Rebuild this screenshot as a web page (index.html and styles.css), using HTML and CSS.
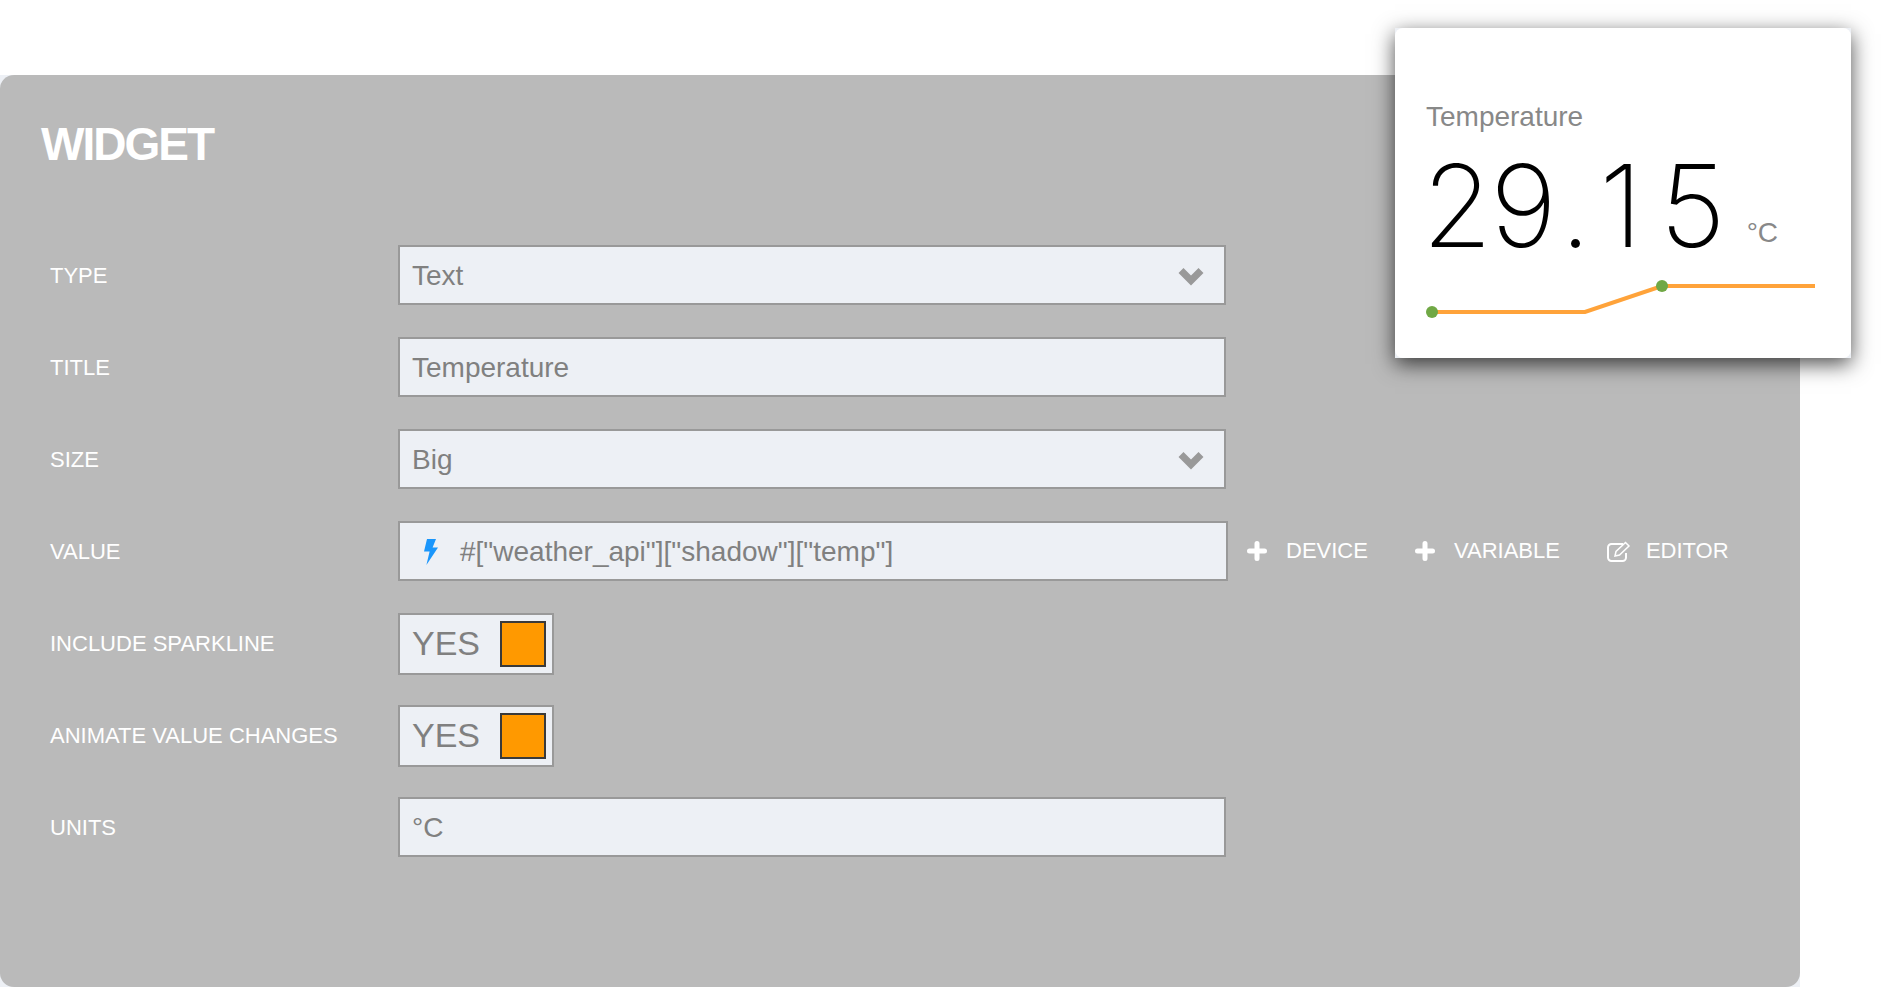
FILE: index.html
```html
<!DOCTYPE html>
<html lang="en">
<head>
<meta charset="utf-8">
<title>Widget</title>
<link rel="stylesheet" href="styles.css">
</head>
<body>
<div class="page">
  <main class="panel-back">
    <div class="panel">
      <h1 class="title">WIDGET</h1>
      <div class="form">
        <div class="row">
          <span class="label">TYPE</span>
          <div class="field field-select"><span>Text</span>
            <svg class="chevron" viewBox="0 0 26 20"><path d="M3 4.500l10 10 10-10" /></svg>
          </div>
        </div>
        <div class="row">
          <span class="label">TITLE</span>
          <div class="field"><span>Temperature</span></div>
        </div>
        <div class="row">
          <span class="label">SIZE</span>
          <div class="field field-select"><span>Big</span>
            <svg class="chevron" viewBox="0 0 26 20"><path d="M3 4.500l10 10 10-10" /></svg>
          </div>
        </div>
        <div class="row">
          <span class="label">VALUE</span>
          <div class="field field-value">
            <svg class="bolt" viewBox="0 0 14 26"><path d="M3 0h9L8.600 8.400H14L2.400 26l3.200-13.600H0z" /></svg>
            <span>#["weather_api"]["shadow"]["temp"]</span>
          </div>
          <div class="actions">
            <a class="action"><svg class="icon-plus" viewBox="0 0 20 20"><path d="M10 2.500v15M2.500 10h15" /></svg>DEVICE</a>
            <a class="action"><svg class="icon-plus" viewBox="0 0 20 20"><path d="M10 2.500v15M2.500 10h15" /></svg>VARIABLE</a>
            <a class="action"><svg class="icon-edit" viewBox="0 0 24 21"><path class="edit-box" d="M16 3H4.500A3.500 3.500 0 0 0 1 6.500v10A3.500 3.500 0 0 0 4.500 20h11a3.500 3.500 0 0 0 3.500-3.500V12" /><path class="edit-pen" d="M8 15l1-4.500L18.500 1.500l3.500 3.500L12.500 14z" /></svg>EDITOR</a>
          </div>
        </div>
        <div class="row">
          <span class="label">INCLUDE SPARKLINE</span>
          <div class="toggle"><span>YES</span><i class="swatch"></i></div>
        </div>
        <div class="row">
          <span class="label">ANIMATE VALUE CHANGES</span>
          <div class="toggle"><span>YES</span><i class="swatch"></i></div>
        </div>
        <div class="row">
          <span class="label">UNITS</span>
          <div class="field"><span>°C</span></div>
        </div>
      </div>
    </div>
  </main>

  <aside class="card">
    <div class="card-inner">
      <div class="card-title">Temperature</div>
      <div class="reading"><span class="number"><span class="int">29</span><span class="dot">.</span><span class="frac">15</span></span><span class="unit">°C</span></div>
      <svg class="spark" viewBox="0 0 400 40">
        <path class="spark-line" d="M6 30H159L236 4H389" />
        <circle class="spark-dot" cx="6" cy="30" r="6" />
        <circle class="spark-dot" cx="236" cy="4" r="6" />
      </svg>
    </div>
  </aside>
</div>
</body>
</html>
```
FILE: styles.css
```css
* { box-sizing: border-box; }
html, body { margin: 0; height: 100%; background: #fff; }
body { font-family: "Liberation Sans", Arial, sans-serif; overflow: hidden; }
.page { position: relative; height: 987px; padding-top: 75px; overflow: hidden; }

.panel-back { width: 1800px; height: 912px; background: #edf0f5; }
.panel {
  height: 100%;
  background: #bababa;
  border-radius: 14px;
  padding: 43px 0 0 41px;
}
.title {
  margin: 0;
  font-size: 46px;
  line-height: 52px;
  font-weight: 700;
  letter-spacing: -2px;
  color: #fff;
}
.form { display: flex; flex-direction: column; gap: 32px; margin-top: 75px; }
.row { display: flex; align-items: center; height: 60px; padding-left: 9px; }
.label { width: 348px; flex: none; padding-top: 2px; font-size: 22px; color: #fff; }

.field {
  width: 828px;
  height: 60px;
  display: flex;
  align-items: center;
  justify-content: space-between;
  padding: 1px 20px 0 12px;
  background: #edf0f5;
  border: 2px solid #999;
  font-size: 28px;
  color: #808080;
}
.field-value { width: 830px; justify-content: flex-start; padding-left: 24px; }
.bolt { width: 14px; height: 26px; margin-right: 22px; fill: #1a96fb; }
.chevron { width: 26px; height: 20px; fill: none; stroke: #999; stroke-width: 7; }

.actions { display: flex; margin-left: 19px; font-size: 22px; color: #fff; }
.action { display: flex; align-items: center; }
.action:nth-child(1) { margin-right: 47px; }
.action:nth-child(2) { margin-right: 47px; }
.icon-plus { width: 20px; height: 20px; margin-right: 19px; fill: none; stroke: #fff; stroke-width: 5; stroke-linecap: round; }
.icon-edit { width: 24px; height: 21px; margin-right: 15px; fill: none; stroke: #fff; }
.edit-box { stroke-width: 2; }
.edit-pen { stroke-width: 1.500; }

.toggle {
  width: 156px;
  height: 62px;
  margin-top: 2px;
  display: flex;
  align-items: center;
  justify-content: space-between;
  padding: 0 6px 2px 12px;
  background: #edf0f5;
  border: 2px solid #999;
  font-size: 34px;
  color: #808080;
}
.swatch { width: 46px; height: 46px; margin-top: 2px; background: #f90; border: 2px solid #3a3a3a; }

.card {
  position: absolute;
  left: 1395px;
  top: 28px;
  width: 456px;
  height: 330px;
  background: #edf0f5;
  box-shadow: 0 6px 20px rgba(0, 0, 0, 0.7);
}
.card-inner {
  height: 100%;
  background: #fff;
  border-radius: 8px;
  padding: 73px 0 0 31px;
}
.card-title { font-size: 28px; line-height: 32px; color: #888; }
.reading { height: 116px; margin-top: 15px; margin-left: -4px; white-space: nowrap; }
.number {
  font-family: Inter, "Liberation Sans", sans-serif;
  font-weight: 200;
  font-size: 114px;
  line-height: 116px;
  color: #000;
}
.int { letter-spacing: -2px; }
.dot { margin-left: 5px; letter-spacing: 8px; }
.frac { letter-spacing: 17px; }
.unit { margin-left: 4px; font-size: 28px; vertical-align: 5px; color: #888; }
.spark { display: block; width: 400px; height: 40px; margin-top: 18px; overflow: visible; }
.spark-line { fill: none; stroke: #ffa33a; stroke-width: 4; }
.spark-dot { fill: #70a845; }
```
